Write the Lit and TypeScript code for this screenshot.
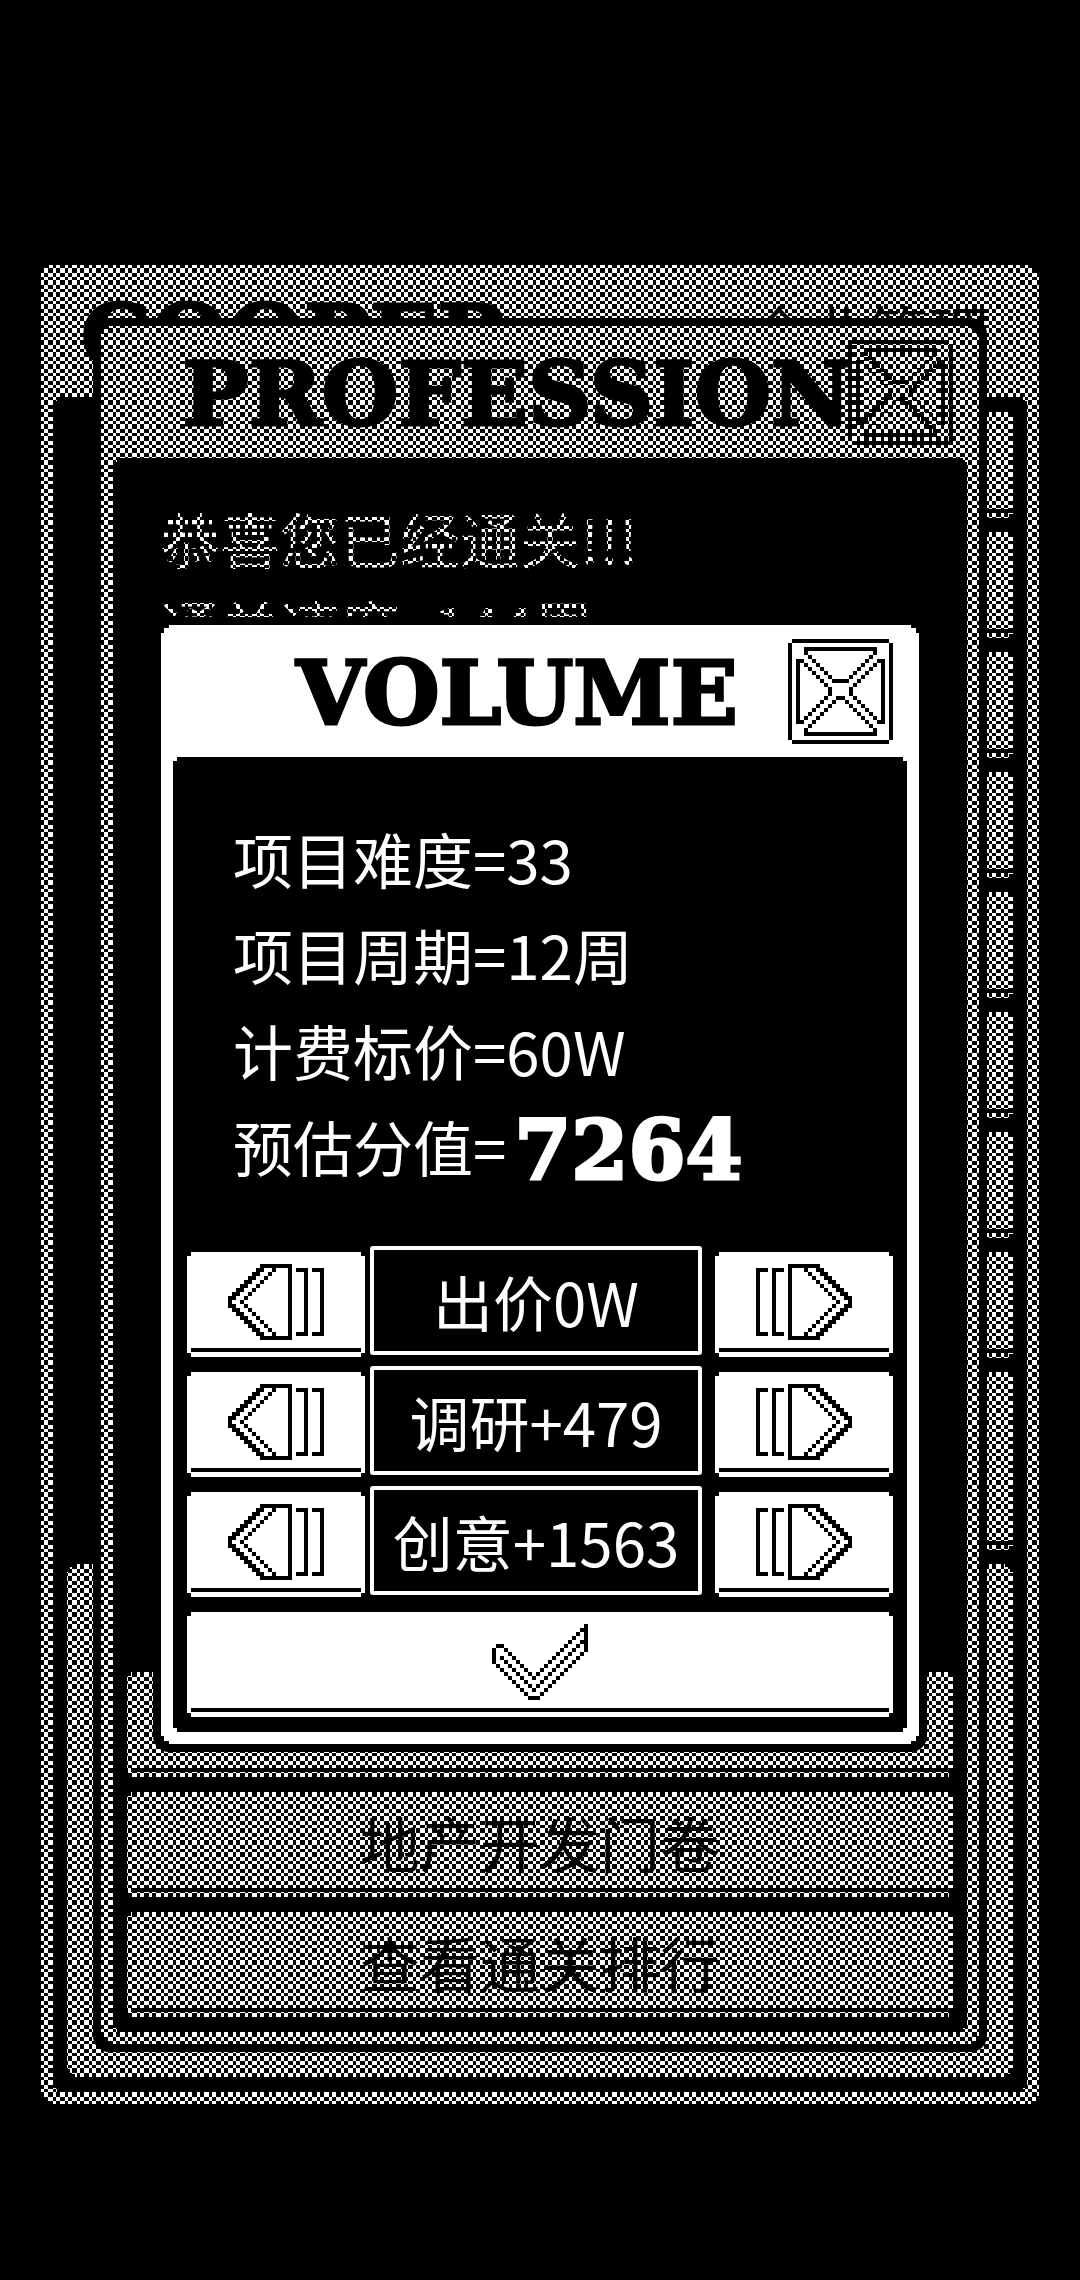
import { LitElement, html, css, svg } from "lit";
import { customElement, property, state } from "lit/decorators.js";

type Line = [number, number, number, number];

/* Icons are lists of line segments on a coarse cell grid. */
const CLOSE: Line[] = [
  [1, 0, 24, 0], [1, 25, 24, 25], [0, 1, 0, 24], [25, 1, 25, 24],
  [4, 2, 21, 2], [4, 2, 4, 3], [21, 2, 21, 3], [5, 4, 11, 10], [20, 4, 14, 10], [11, 10, 14, 10],
  [2, 5, 2, 20], [3, 5, 3, 5], [3, 20, 3, 20], [4, 6, 10, 12], [10, 12, 10, 13], [10, 13, 4, 19],
  [23, 5, 23, 20], [22, 5, 22, 5], [22, 20, 22, 20], [21, 6, 15, 12], [15, 12, 15, 13], [15, 13, 21, 19],
  [12, 14, 13, 14], [11, 15, 5, 21], [14, 15, 20, 21], [4, 22, 4, 23], [21, 22, 21, 23], [4, 23, 21, 23],
];
const ARROW: Line[] = [
  [0, 8, 0, 10], [0, 8, 8, 0], [1, 8, 8, 1], [0, 10, 8, 18], [1, 10, 8, 17],
  [8, 0, 15, 0], [8, 18, 15, 18], [15, 0, 15, 18],
  [11, 1, 3, 9], [3, 9, 11, 17],
  [17, 1, 19, 1], [19, 1, 19, 17], [17, 17, 19, 17],
  [21, 1, 23, 1], [23, 1, 23, 17], [21, 17, 23, 17],
];
const CHECK: Line[] = [
  [0, 6, 0, 9], [1, 5, 2, 5], [3, 6, 10, 13], [10, 13, 22, 1], [23, 0, 23, 6],
  [2, 8, 10, 16], [10, 16, 22, 4], [1, 10, 8, 17], [9, 18, 11, 18], [12, 17, 22, 7],
];

function cells(lines: Line[]): string {
  const seen = new Set<string>();
  for (const [x0, y0, x1, y1] of lines) {
    const n = Math.max(Math.abs(x1 - x0), Math.abs(y1 - y0));
    for (let i = 0; i <= n; i++) {
      const t = n ? i / n : 0;
      seen.add(`M${Math.round(x0 + (x1 - x0) * t)} ${Math.round(y0 + (y1 - y0) * t)}h1v1h-1z`);
    }
  }
  return [...seen].join("");
}

function icon(lines: Line[], w: number, h: number, cls: string) {
  return html`<svg class=${cls} viewBox="0 0 ${w} ${h}" aria-hidden="true" shape-rendering="crispEdges">
    <path fill="#000" d=${cells(lines)}></path>
  </svg>`;
}

/* The dimming screen: a 24px tile of slightly uneven checker cells. */
const COLS = [0, 5, 8, 12, 17, 20, 24];
const ROWS = [0, 3, 8, 12, 15, 20, 24];
function screenTile(): string {
  let d = "";
  for (let i = 0; i < 6; i++) {
    for (let j = 0; j < 6; j++) {
      if ((i + j) % 2) d += `M${COLS[i]} ${ROWS[j]}H${COLS[i + 1]}V${ROWS[j + 1]}H${COLS[i]}z`;
    }
  }
  return d;
}

const shared = css`
  :host {
    --notch: polygon(
      0 4px, 4px 4px, 4px 0,
      calc(100% - 4px) 0, calc(100% - 4px) 4px, 100% 4px,
      100% calc(100% - 4px), calc(100% - 4px) calc(100% - 4px), calc(100% - 4px) 100%,
      4px 100%, 4px calc(100% - 4px), 0 calc(100% - 4px)
    );
    --steps: polygon(
      0 8px, 3px 8px, 3px 3px, 8px 3px, 8px 0,
      calc(100% - 8px) 0, calc(100% - 8px) 3px, calc(100% - 3px) 3px, calc(100% - 3px) 8px, 100% 8px,
      100% calc(100% - 8px), calc(100% - 3px) calc(100% - 8px), calc(100% - 3px) calc(100% - 3px),
      calc(100% - 8px) calc(100% - 3px), calc(100% - 8px) 100%,
      8px 100%, 8px calc(100% - 3px), 3px calc(100% - 3px), 3px calc(100% - 8px), 0 calc(100% - 8px)
    );
  }
  * {
    box-sizing: border-box;
  }
  button {
    display: flex;
    align-items: center;
    justify-content: center;
    margin: 0;
    border: 0;
    padding: 0;
    font: inherit;
    color: #000;
    cursor: pointer;
  }
  .key {
    min-height: 105px;
    padding-bottom: 5px;
    background: linear-gradient(#000, #000) center bottom 5px / calc(100% - 8px) 4px no-repeat, #fff;
    clip-path: var(--notch);
  }
`;

@customElement("game-window")
export class GameWindow extends LitElement {
  @property() heading = "";
  @property() note = "";
  @property({ type: Boolean }) closable = false;

  static styles = [
    shared,
    css`
      :host {
        display: flex;
      }
      .rim {
        flex: 1;
        min-width: 0;
        display: flex;
        padding: 8px;
        background: #000;
        border-radius: 16px;
      }
      .frame {
        flex: 1;
        min-width: 0;
        display: flex;
        flex-direction: column;
        padding: 0 12px 12px;
        background: #fff;
        clip-path: var(--steps);
      }
      .head {
        display: grid;
        grid-template-columns: 1fr auto;
        align-items: center;
        height: 132px;
        padding: 0 14px;
      }
      .title {
        grid-area: 1 / 1 / 2 / 3;
        margin: 0;
        padding: 4px 46px 0 0;
        font: 900 88px/100px "DejaVu Serif", serif;
        -webkit-text-stroke: 3px currentColor;
        text-align: center;
        white-space: nowrap;
      }
      .start {
        padding: 12px 0 0 14px;
        text-align: left;
      }
      .note {
        grid-area: 1 / 2;
        font-size: 60px;
        line-height: 60px;
        padding-right: 24px;
      }
      .close {
        grid-area: 1 / 2;
        background: none;
      }
      .x {
        display: block;
        width: 105px;
        height: 105px;
      }
      .body {
        flex: 1;
        display: flex;
        flex-direction: column;
        background: #000;
        color: #fff;
        clip-path: var(--notch);
      }
    `,
  ];

  render() {
    return html`<section class="rim">
      <div class="frame">
        <header class="head">
          <h2 class="title ${this.closable ? "" : "start"}">${this.heading}</h2>
          ${this.closable
            ? html`<button class="close" aria-label="关闭">${icon(CLOSE, 26, 26, "x")}</button>`
            : html`<span class="note">${this.note}</span>`}
        </header>
        <div class="body"><slot></slot></div>
      </div>
    </section>`;
  }
}

@customElement("app-root")
export class AppRoot extends LitElement {
  @state() private rows = [
    { label: "出价", value: "0W" },
    { label: "调研", value: "+479" },
    { label: "创意", value: "+1563" },
  ];
  private facts = [
    ["项目难度", "33"],
    ["项目周期", "12周"],
    ["计费标价", "60W"],
  ];

  static styles = [
    shared,
    css`
      :host {
        display: grid;
        grid-template-columns: minmax(0, 1fr);
        align-items: start;
        align-content: start;
        position: relative;
        min-height: 100vh;
        background: #000;
        font-family: "Noto Sans CJK SC", sans-serif;
        font-size: 60px;
        line-height: 88px;
      }
      .desk,
      .report,
      .bid {
        grid-area: 1 / 1;
      }
      .desk {
        z-index: 0;
        margin: 257px 33px 0;
      }
      .report {
        z-index: 1;
        align-self: stretch;
        margin: 318px 93px 60px;
      }
      .screen {
        z-index: 2;
        position: absolute;
        inset: 0;
        width: 100%;
        height: 100%;
        pointer-events: none;
      }
      .bid {
        z-index: 3;
        margin: 617px 153px 0;
      }
      .shelf {
        display: flex;
        flex-direction: column;
        align-items: flex-end;
        gap: 14px;
        padding: 15px 14px;
      }
      .tab {
        width: 120px;
        min-height: 106px;
      }
      .tall {
        min-height: 178px;
      }
      .tray {
        width: 100%;
        height: 513px;
        background: #fff;
        clip-path: var(--steps);
      }
      .news {
        padding: 36px 47px;
      }
      .line {
        margin: 0;
        white-space: nowrap;
      }
      .menu {
        display: flex;
        flex-direction: column;
        gap: 15px;
        margin-top: auto;
        padding: 15px 14px;
      }
      .facts {
        margin: 0;
        padding: 53px 60px 58px;
        line-height: 96px;
      }
      .fact {
        display: flex;
        align-items: center;
        height: 96px;
        white-space: nowrap;
      }
      .fact dd {
        margin: 0;
      }
      .fact .score {
        padding: 8px 0 0 8px;
        font: 900 82px/96px "DejaVu Serif", serif;
        -webkit-text-stroke: 3px currentColor;
      }
      .controls {
        display: grid;
        gap: 15px;
        padding: 0 14px 15px;
      }
      .row {
        display: grid;
        grid-template-columns: 178px minmax(0, 1fr) 186px;
        gap: 5px;
      }
      .next {
        margin-left: 8px;
      }
      .value {
        display: flex;
        align-items: center;
        justify-content: center;
        height: 109px;
        margin: -6px 0 2px;
        border: 4px solid #fff;
        border-radius: 3px;
        white-space: nowrap;
      }
      .arrow,
      .check {
        width: 96px;
        height: 76px;
      }
      .flip {
        transform: scaleX(-1);
      }
    `,
  ];

  render() {
    return html`
      <game-window class="desk" heading="COOPER" note="企业管理">
        <div class="shelf">
          ${Array.from({ length: 8 }, () => html`<div class="key tab"></div>`)}
          <div class="key tab tall"></div>
          <div class="tray"></div>
        </div>
      </game-window>

      <game-window class="report" heading="PROFESSION" closable>
        <div class="news">
          <p class="line">恭喜您已经通关!!!</p>
          <p class="line">通关速度=144周</p>
        </div>
        <div class="menu">
          <div class="key"></div>
          <button class="key">地产开发门卷</button>
          <button class="key">查看通关排行</button>
        </div>
      </game-window>

      <svg class="screen" aria-hidden="true" shape-rendering="crispEdges">
        <defs>
          ${svg`<pattern id="checker" x="0" y="1" width="24" height="24" patternUnits="userSpaceOnUse">
            <path fill="#000" d=${screenTile()}></path>
          </pattern>`}
        </defs>
        <rect width="100%" height="100%" fill="url(#checker)"></rect>
      </svg>

      <game-window class="bid" heading="VOLUME" closable>
        <dl class="facts">
          ${this.facts.map(
            ([k, v]) => html`<div class="fact"><dt>${k}=</dt><dd>${v}</dd></div>`
          )}
          <div class="fact"><dt>预估分值=</dt><dd class="score">7264</dd></div>
        </dl>
        <div class="controls">
          ${this.rows.map(
            (r) => html`<div class="row">
              <button class="key" aria-label="${r.label}减少">${icon(ARROW, 24, 19, "arrow")}</button>
              <output class="value">${r.label}${r.value}</output>
              <button class="key next" aria-label="${r.label}增加">${icon(ARROW, 24, 19, "arrow flip")}</button>
            </div>`
          )}
          <button class="key" aria-label="确认">${icon(CHECK, 24, 19, "check")}</button>
        </div>
      </game-window>
    `;
  }
}
